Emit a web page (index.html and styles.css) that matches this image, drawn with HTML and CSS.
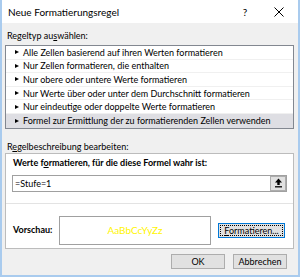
FILE: index.html
```html
<!DOCTYPE html>
<html lang="de">
<head>
    <meta charset="UTF-8">
    <title>Neue Formatierungsregel</title>
    <link rel="stylesheet" href="styles.css">
</head>
<body>
<div class="dialog">
    <div class="titlebar">
        <span class="title">Neue Formatierungsregel</span>
        <span class="help">?</span>
        <span class="close">
            <svg width="10" height="10" viewBox="0 0 10 10"><path d="M0.5 0.5 L9.5 9.5 M9.5 0.5 L0.5 9.5" stroke="#000" stroke-width="1" fill="none"/></svg>
        </span>
    </div>
    <div class="body">
        <div class="label first">Regeltyp au<u>s</u>wählen:</div>
        <div class="list">
            <div class="row"><i class="tri"></i>Alle Zellen basierend auf ihren Werten formatieren</div>
            <div class="row"><i class="tri"></i>Nur Zellen formatieren, die enthalten</div>
            <div class="row"><i class="tri"></i>Nur obere oder untere Werte formatieren</div>
            <div class="row"><i class="tri"></i>Nur Werte über oder unter dem Durchschnitt formatieren</div>
            <div class="row"><i class="tri"></i>Nur eindeutige oder doppelte Werte formatieren</div>
            <div class="row sel"><i class="tri"></i>Formel zur Ermittlung der zu formatierenden Zellen verwenden</div>
        </div>
        <div class="label second">R<u>e</u>gelbeschreibung bearbeiten:</div>
        <div class="panel">
            <div class="formula">
                <div class="bold">Werte f<u>o</u>rmatieren, für die diese Formel wahr ist:</div>
                <div class="input">
                    <span class="value">=Stufe=1</span>
                    <span class="pick">
                        <svg width="9" height="10" viewBox="0 0 9 10">
                            <path d="M4.5 0.5 L1 4.5 H3.3 V7 H5.7 V4.5 H8 Z" fill="#000"/>
                            <path d="M1 8.8 H8" stroke="#000" stroke-width="1.3"/>
                        </svg>
                    </span>
                </div>
            </div>
            <div class="preview">
                <span class="bold">Vorschau:</span>
                <div class="sample">AaBbCcYyZz</div>
                <button class="btn focus"><span><u>F</u>ormatieren...</span></button>
            </div>
        </div>
        <div class="actions">
            <button class="btn">OK</button>
            <button class="btn">Abbrechen</button>
        </div>
    </div>
</div>
</body>
</html>
```

FILE: styles.css
```css
* {
    box-sizing: border-box;
}
html, body {
    margin: 0;
    background: #fff;
}
body {
    font-family: Lato, "Liberation Sans", sans-serif;
    font-size: 9px;
    color: #000;
}
.dialog {
    width: 300px;
    height: 277px;
    border: 2px solid #a9cbee;
    border-top: 0;
    display: flex;
    flex-direction: column;
    background: #f0f0f0;
}
.titlebar {
    height: 23px;
    flex: none;
    background: #fff;
    display: flex;
    align-items: center;
    padding-left: 6px;
    font-size: 10px;
}
.title {
    flex: 1;
}
.help {
    width: 30px;
    text-align: center;
    font-size: 10px;
}
.close {
    width: 38px;
    display: flex;
    justify-content: center;
}
.body {
    flex: 1;
    padding: 0 4px 0 3px;
}
.label {
    line-height: 12px;
    padding-left: 2px;
}
.label.first {
    margin-top: 7px;
    margin-bottom: 3px;
}
.label.second {
    margin-top: 12px;
}
.list {
    background: #fff;
    border: 1px solid #828790;
}
.row {
    height: 13.6px;
    line-height: 13px;
    padding-left: 9px;
    border-bottom: 1px solid #f0f0f0;
    display: flex;
    align-items: center;
    white-space: nowrap;
}
.row.sel {
    background: #dedee3;
    border-bottom: 0;
}
.tri {
    width: 0;
    height: 0;
    border-left: 4px solid #000;
    border-top: 2.5px solid transparent;
    border-bottom: 2.5px solid transparent;
    margin-right: 4px;
}
.panel {
    height: 96px;
    background: #fff;
    border: 1px solid #bcbcbc;
}
.formula {
    padding: 3px 6px 11px;
    border-bottom: 1px solid #e3e3e3;
}
.bold {
    font-weight: bold;
    line-height: 12px;
}
.formula .bold {
    margin-bottom: 6px;
    padding-left: 1px;
}
.input {
    height: 17px;
    border: 1px solid #a0a0a0;
    display: flex;
    align-items: center;
    justify-content: space-between;
    padding-left: 2px;
}
.pick {
    width: 16px;
    height: 15px;
    background: #e1e1e1;
    border: 1px solid #adadad;
    display: flex;
    align-items: center;
    justify-content: center;
}
.preview {
    display: flex;
    align-items: center;
    padding: 12px 0 0 7px;
}
.preview .bold {
    width: 46px;
}
.sample {
    width: 152px;
    height: 29px;
    border: 1px solid #a0a0a0;
    display: flex;
    align-items: center;
    justify-content: center;
    color: #fff500;
    font-size: 10px;
}
.btn {
    font-family: inherit;
    font-size: 9px;
    color: #000;
    background: #e1e1e1;
    border: 1px solid #adadad;
    padding: 0;
    height: 15px;
}
.btn.focus {
    width: 67px;
    margin-left: 7px;
    border-color: #0078d7;
    padding: 1px;
}
.btn.focus span {
    display: block;
    height: 11px;
    line-height: 10px;
    border: 1px dotted #000;
}
.actions {
    display: flex;
    justify-content: flex-end;
    gap: 8px;
    margin-top: 5px;
    padding-right: 7px;
}
.actions .btn {
    width: 54px;
}
```
